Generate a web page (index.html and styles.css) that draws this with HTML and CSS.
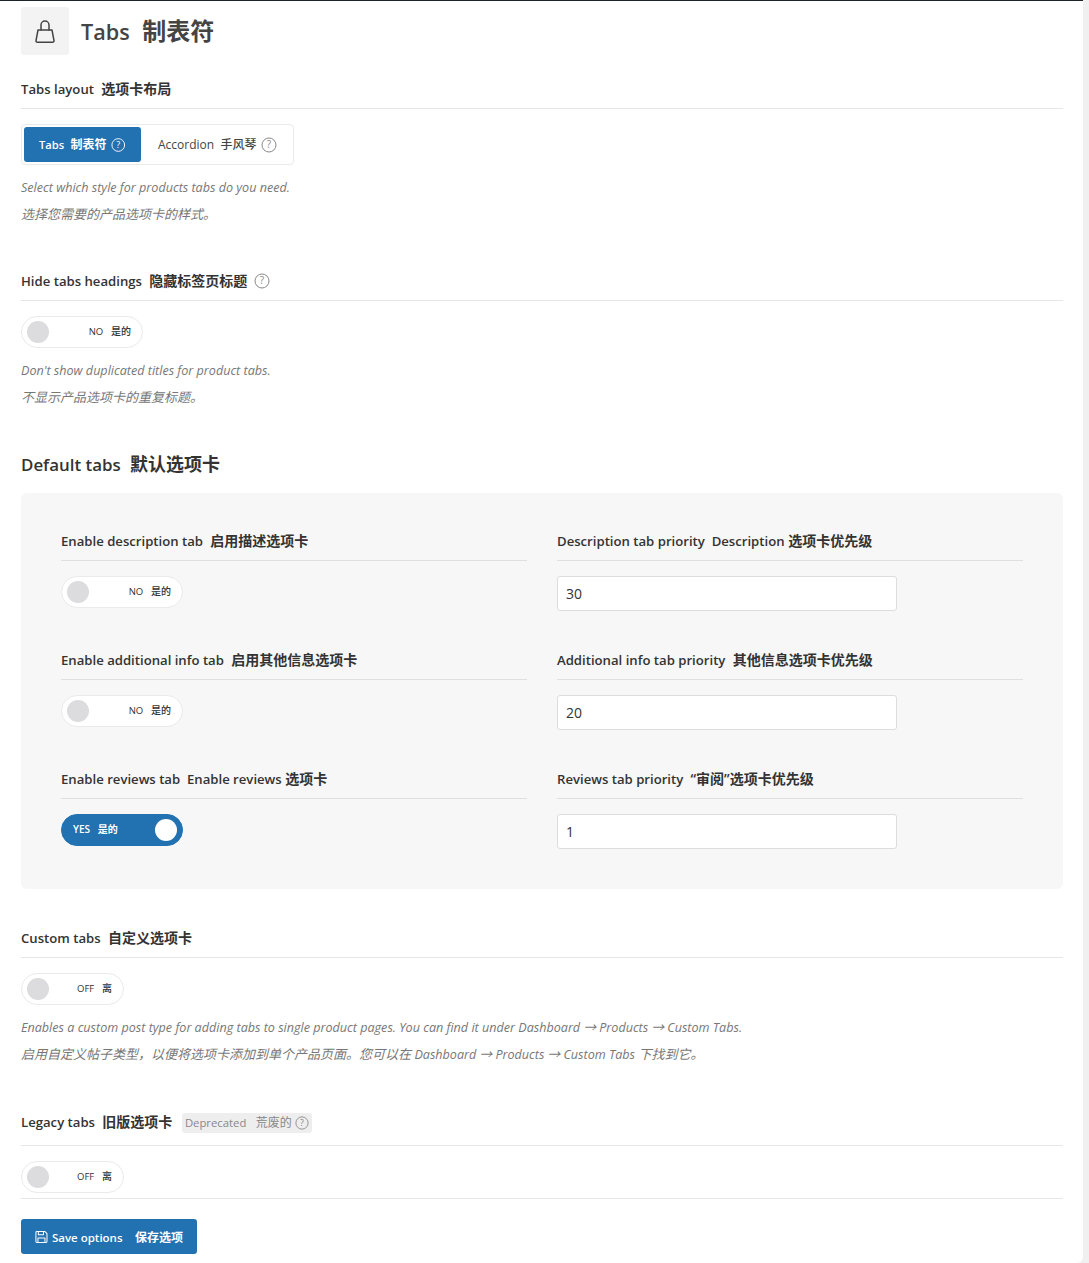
FILE: index.html
```html
<!DOCTYPE html>
<html lang="zh">
<head>
<meta charset="utf-8">
<title>Tabs</title>
<link rel="stylesheet" href="styles.css">
</head>
<body>
<main class="panel">
  <header class="page-title">
    <span class="title-icon">
      <svg width="22" height="24" viewBox="0 0 22 24" fill="none" stroke="#444" stroke-width="1.5" stroke-linejoin="round" stroke-linecap="round"><path d="M4 11h14l2 10.6a1.4 1.4 0 0 1-1.4 1.6H3.4A1.4 1.4 0 0 1 2 21.6z"/><path d="M7 11V6a4 4 0 0 1 8 0v5"/></svg>
    </span>
    <h1><span class="en">Tabs</span>&nbsp; 制表符</h1>
  </header>

  <section class="field f-layout">
    <h4 class="label"><span class="en">Tabs layout</span>&nbsp; 选项卡布局</h4>
    <div class="segmented">
      <span class="seg seg-on"><span class="seg-text"><span class="en">Tabs</span>&nbsp; 制表符</span> <svg class="help" viewBox="0 0 16 16"><circle cx="8" cy="8" r="7"/><text x="8" y="11.2">?</text></svg></span>
      <span class="seg"><span class="seg-text"><span class="en">Accordion</span>&nbsp; 手风琴</span> <svg class="help" viewBox="0 0 16 16"><circle cx="8" cy="8" r="7"/><text x="8" y="11.2">?</text></svg></span>
    </div>
    <p class="hint">Select which style for products tabs do you need.</p>
    <p class="hint zh">选择您需要的产品选项卡的样式。</p>
  </section>

  <section class="field f-hide">
    <h4 class="label"><span class="en">Hide tabs headings</span>&nbsp; 隐藏标签页标题 <svg class="help" viewBox="0 0 16 16"><circle cx="8" cy="8" r="7"/><text x="8" y="11.2">?</text></svg></h4>
    <div class="toggle t-no"><i></i><span class="state"><span class="en">NO</span>&nbsp;&nbsp; 是的</span></div>
    <p class="hint">Don't show duplicated titles for product tabs.</p>
    <p class="hint zh">不显示产品选项卡的重复标题。</p>
  </section>

  <h2 class="group-title"><span class="en">Default tabs</span>&nbsp; 默认选项卡</h2>

  <div class="group">
    <section class="cell">
      <h4 class="label"><span class="en">Enable description tab</span>&nbsp; 启用描述选项卡</h4>
      <div class="toggle t-no"><i></i><span class="state"><span class="en">NO</span>&nbsp;&nbsp; 是的</span></div>
    </section>
    <section class="cell">
      <h4 class="label"><span class="en">Description tab priority&nbsp; Description</span> 选项卡优先级</h4>
      <input class="num" type="text" value="30">
    </section>
    <section class="cell">
      <h4 class="label"><span class="en">Enable additional info tab</span>&nbsp; 启用其他信息选项卡</h4>
      <div class="toggle t-no"><i></i><span class="state"><span class="en">NO</span>&nbsp;&nbsp; 是的</span></div>
    </section>
    <section class="cell">
      <h4 class="label"><span class="en">Additional info tab priority</span>&nbsp; 其他信息选项卡优先级</h4>
      <input class="num" type="text" value="20">
    </section>
    <section class="cell">
      <h4 class="label"><span class="en">Enable reviews tab&nbsp; Enable reviews</span> 选项卡</h4>
      <div class="toggle t-yes"><span class="state"><span class="en">YES</span>&nbsp;&nbsp; 是的</span><i></i></div>
    </section>
    <section class="cell">
      <h4 class="label"><span class="en">Reviews tab priority</span>&nbsp; “审阅”选项卡优先级</h4>
      <input class="num" type="text" value="1">
    </section>
  </div>

  <section class="field f-custom">
    <h4 class="label"><span class="en">Custom tabs</span>&nbsp; 自定义选项卡</h4>
    <div class="toggle t-off"><i></i><span class="state"><span class="en">OFF</span>&nbsp;&nbsp; 离</span></div>
    <p class="hint">Enables a custom post type for adding tabs to single product pages. You can find it under Dashboard → Products → Custom Tabs.</p>
    <p class="hint zh">启用自定义帖子类型，以便将选项卡添加到单个产品页面。您可以在 <span class="en">Dashboard → Products → Custom Tabs</span> 下找到它。</p>
  </section>

  <section class="field f-legacy">
    <h4 class="label"><span class="en">Legacy tabs</span>&nbsp; 旧版选项卡 <span class="badge"><span><span class="en">Deprecated</span>&nbsp;&nbsp; 荒废的</span><svg class="help" viewBox="0 0 16 16"><circle cx="8" cy="8" r="7"/><text x="8" y="11.2">?</text></svg></span></h4>
    <div class="toggle t-off"><i></i><span class="state"><span class="en">OFF</span>&nbsp;&nbsp; 离</span></div>
  </section>

  <footer class="actions">
    <button class="save" type="button">
      <svg width="14" height="14" viewBox="0 0 14 14" fill="none" stroke="#fff" stroke-width="1.1" stroke-linejoin="round"><path d="M1 2a1 1 0 0 1 1-1h8.6L13 3.4V12a1 1 0 0 1-1 1H2a1 1 0 0 1-1-1z"/><path d="M3.6 1v3.6h5.6V1M3.2 13V8h7.6v5"/></svg>
      <span><span class="en">Save options</span>&nbsp;&nbsp;&nbsp; 保存选项</span>
    </button>
  </footer>
</main>
</body>
</html>
```
FILE: styles.css
```css
* { box-sizing: border-box; }
html, body { margin: 0; padding: 0; }
body {
  background: #f0f0f0;
  font-family: "Open Sans", "Noto Sans CJK SC", sans-serif;
  color: #333;
  height: 1263px;
  overflow: hidden;
}
.panel {
  width: 1083px;
  height: 1263px;
  background: #fff;
  border-top: 1px solid #1d2327;
  padding: 6px 20px 0 21px;
  border-bottom-right-radius: 6px;
}
.page-title { display: flex; align-items: center; gap: 12px; height: 48px; }
.title-icon {
  width: 48px; height: 48px; background: #f3f3f3; border-radius: 3px;
  display: flex; align-items: center; justify-content: center;
}
h1 { margin: 0; font-size: 24px; font-weight: 600; color: #444; line-height: 50px; }
h1 .en { font-size: 21.6px; }
.label {
  margin: 0;
  font-size: 14px;
  font-weight: 600;
  line-height: 20px;
  height: 30px;
  color: #333;
  border-bottom: 1px solid #e6e6e6;
  white-space: pre;
}
.label .en { font-size: 13.15px; }
.f-layout { margin-top: 24px; }
.f-hide { margin-top: 43px; }
.f-custom { margin-top: 39px; }
.f-legacy { margin-top: 44px; }
.help { width: 16px; height: 16px; vertical-align: -3px; margin-left: 3px; }
.help circle { fill: none; stroke: #888; stroke-width: 1; }
.help text { font: 10px "Open Sans", sans-serif; fill: #888; text-anchor: middle; }
.segmented {
  margin-top: 15px;
  width: 273px; height: 41px;
  border: 1px solid #eaeaea; border-radius: 4px;
  padding: 2px;
  display: flex;
}
.seg {
  display: flex; align-items: center; gap: 5px;
  font-size: 12px; font-weight: 500; color: #444;
  padding: 0 17px; height: 35px; white-space: pre;
}
.seg-text { padding-bottom: 2px; }
.seg .help { margin-left: 0; }
.seg-on {
  width: 117px; background: #2271b1; color: #fff; border-radius: 3px;
  font-weight: 700; padding: 0 15px;
}
.seg-on .en { font-size: 11.2px; font-weight: 600; }
.seg-on .help circle { stroke: #fff; }
.seg-on .help text { fill: #fff; }
.hint {
  margin: 0;
  font-size: 12.58px;
  font-style: italic;
  color: #777;
  line-height: 27px;
}
.hint.zh { font-size: 13px; }
.hint.zh .en { font-size: 12.58px; }
.toggle + .hint, .segmented + .hint { margin-top: 9px; }
.toggle {
  margin-top: 15px;
  height: 32px; border-radius: 16px;
  border: 1px solid #eaeaea;
  background: #fff;
  display: flex; align-items: center; justify-content: space-between;
  padding: 0 11px 0 5px;
  font-size: 10px; font-weight: 500; color: #333;
  white-space: pre;
}
.state { padding-bottom: 3px; }
.toggle .en { font-size: 9.5px; font-weight: 400; }
.toggle i { width: 22px; height: 22px; border-radius: 50%; background: #dcdcde; display: block; }
.t-no { width: 122px; }
.t-off { width: 103px; }
.t-yes {
  width: 122px; background: #2271b1; border-color: #2271b1; color: #fff; font-weight: 700;
  padding: 0 5px 0 11px;
}
.t-yes .en { font-weight: 600; font-size: 10px; }
.t-yes i { background: #fff; }
.group-title {
  margin: 39px 0 0;
  font-size: 18px; font-weight: 600; line-height: 28px; color: #333;
}
.group-title .en { font-size: 16.9px; }
.group {
  margin-top: 14px;
  background: #f7f7f7;
  border-radius: 6px;
  padding: 38px 40px 40px;
  height: 396px;
  display: grid;
  grid-template-columns: 466px 466px;
  column-gap: 30px;
  grid-auto-rows: 119px;
}
.group .label { border-bottom-color: #e0e0e0; }
.num {
  display: block;
  margin-top: 15px;
  width: 340px; height: 35px;
  border: 1px solid #ddd; border-radius: 3px;
  background: #fff;
  padding: 0 8px;
  font: 14px "Open Sans", sans-serif;
  color: #333;
}
.badge {
  display: inline-flex; align-items: center; gap: 3px;
  background: #eee; border-radius: 3px;
  font-size: 12px; font-weight: 400; color: #888;
  padding: 0 3px; height: 20px; margin-left: 6px;
  white-space: pre;
  vertical-align: 0;
}
.badge .en { font-size: 11.3px; font-weight: 400; }
.badge .help { width: 14px; height: 14px; margin: 0; }
.f-legacy .label { height: 34px; }
.f-legacy .toggle { margin-bottom: 5px; }
.actions { border-top: 1px solid #e6e6e6; padding-top: 20px; }
.save {
  display: flex; align-items: center; gap: 4px;
  width: 176px; height: 35px;
  background: #2271b1; border: 0; border-radius: 3px;
  padding: 0 14px;
  font: 600 12px "Open Sans", "Noto Sans CJK SC", sans-serif;
  color: #fff;
  white-space: pre;
}
.save .en { font-size: 11.5px; }
```
